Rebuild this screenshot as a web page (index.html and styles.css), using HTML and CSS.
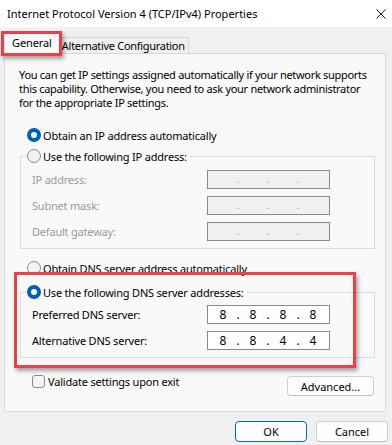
FILE: index.html
```html
<!DOCTYPE html>
<html lang="en">
<head>
    <meta charset="UTF-8">
    <meta name="viewport" content="width=device-width, initial-scale=1.0">
    <title>Internet Protocol Version 4 (TCP/IPv4) Properties</title>
    <link rel="stylesheet" href="styles.css">
</head>
<body>

    <div class="titlebar">
        <span class="title">Internet Protocol Version 4 (TCP/IPv4) Properties</span>
        <svg class="close" width="10" height="10" viewBox="0 0 10 10">
            <path d="M0.5 0.5 L9.5 9.5 M9.5 0.5 L0.5 9.5" stroke="#1a1a1a" stroke-width="1" fill="none"/>
        </svg>
    </div>

    <div class="tabs">
        <div class="tab active">General<span class="highlight"></span></div>
        <div class="tab">Alternative Configuration</div>
    </div>

    <div class="panel">
        <p class="intro">You can get IP settings assigned automatically if your network supports<br>this capability. Otherwise, you need to ask your network administrator<br>for the appropriate IP settings.</p>

        <div class="option first"><span class="radio checked"></span>Obtain an IP address automatically</div>

        <fieldset class="group ip-group disabled">
            <legend><span class="radio"></span>Use the following IP address:</legend>
            <div class="rows">
                <label>IP address:</label>
                <div class="ip"><span></span><i>.</i><span></span><i>.</i><span></span><i>.</i><span></span></div>
                <label>Subnet mask:</label>
                <div class="ip"><span></span><i>.</i><span></span><i>.</i><span></span><i>.</i><span></span></div>
                <label>Default gateway:</label>
                <div class="ip"><span></span><i>.</i><span></span><i>.</i><span></span><i>.</i><span></span></div>
            </div>
        </fieldset>

        <div class="option dns-auto"><span class="radio"></span>Obtain DNS server address automatically</div>

        <div class="dns-wrap">
            <span class="highlight"></span>
            <fieldset class="group dns-group">
                <legend><span class="radio checked"></span>Use the following DNS server addresses:</legend>
                <div class="rows">
                    <label>Preferred DNS server:</label>
                    <div class="ip"><span>8</span><i>.</i><span>8</span><i>.</i><span>8</span><i>.</i><span>8</span></div>
                    <label>Alternative DNS server:</label>
                    <div class="ip"><span>8</span><i>.</i><span>8</span><i>.</i><span>4</span><i>.</i><span>4</span></div>
                </div>
            </fieldset>
        </div>

        <div class="footer-row">
            <div class="check"><span class="box"></span>Validate settings upon exit</div>
            <button class="btn advanced">Advanced...</button>
        </div>
    </div>

    <div class="buttons">
        <button class="btn primary">OK</button>
        <button class="btn">Cancel</button>
    </div>

</body>
</html>
```

FILE: styles.css
```css
* {
    margin: 0;
    padding: 0;
    box-sizing: border-box;
}

body {
    width: 392px;
    height: 445px;
    overflow: hidden;
    background: #f0f0f0;
    font-family: 'Noto Sans', sans-serif;
    font-size: 11px;
    color: #000;
}

/* title bar */
.titlebar {
    height: 27px;
    background: #fff;
    display: flex;
    align-items: center;
    justify-content: space-between;
    padding: 0 6px 0 7px;
}

.title {
    font-size: 11px;
    color: #000;
}

/* tabs */
.tabs {
    height: 26px;
    display: flex;
    align-items: flex-end;
    padding-left: 4px;
    position: relative;
    z-index: 1;
}

.tab {
    height: 16px;
    padding: 0 3px 0 2px;
    display: flex;
    align-items: center;
    background: #f0f0f0;
    border: 1px solid #d9d9d9;
    border-bottom: none;
    border-left: none;
    line-height: 14px;
    letter-spacing: -0.3px;
}

.tab.active {
    position: relative;
    height: 21px;
    margin-bottom: -1px;
    padding: 0 7px 2px 7px;
    background: #f9f9f9;
    border-left: 1px solid #d9d9d9;
    letter-spacing: -0.1px;
}

.highlight {
    position: absolute;
    border: 3px solid #ea4149;
    box-shadow: 2px 3px 4px rgba(0, 0, 0, 0.35);
    pointer-events: none;
}

.tab .highlight {
    left: -4px;
    top: -3px;
    right: -3px;
    bottom: -2px;
}

/* panel */
.panel {
    margin-left: 4px;
    width: 382px;
    height: 359px;
    background: #f9f9f9;
    border: 1px solid #d9d9d9;
    padding-top: 14px;
    letter-spacing: -0.2px;
}

.intro {
    line-height: 14px;
    padding-left: 14px;
    white-space: nowrap;
    letter-spacing: -0.3px;
}

.option {
    display: flex;
    align-items: center;
    height: 16px;
    padding-left: 22px;
}

.option.first {
    margin-top: 17px;
}

.option.dns-auto {
    margin-top: 11px;
}

.radio {
    width: 14px;
    height: 14px;
    border-radius: 50%;
    border: 1px solid #8a8a8a;
    background: #f3f3f3;
    margin-right: 2px;
    flex: none;
}

.radio.checked {
    border: 4px solid #005fb8;
    background: #fff;
}

/* group boxes */
.group {
    margin: 5px 10px 0 15px;
    border: 1px solid #dcdcdc;
    padding: 0;
}

.group legend {
    display: flex;
    align-items: center;
    height: 16px;
    margin-left: 6px;
    padding-right: 3px;
}

.rows {
    display: grid;
    grid-template-columns: 175px 123px;
    row-gap: 7px;
    align-items: center;
    padding: 6px 0 7px 11px;
}

.ip {
    height: 19px;
    border: 1px solid #8a8a8a;
    background: #fff;
    display: flex;
    align-items: center;
    padding-left: 3px;
    font-size: 12px;
    letter-spacing: 0;
}

.ip span {
    width: 24px;
    text-align: center;
}

.ip i {
    font-style: normal;
    width: 6px;
    text-align: center;
}

.disabled .rows label {
    color: #9a9a9a;
}

.disabled .ip {
    background: #f0f0f0;
}

.disabled .ip i {
    color: #6f8fa8;
    font-size: 9px;
}

.dns-wrap {
    position: relative;
    margin-top: 8px;
}

.dns-wrap .highlight {
    left: 9px;
    top: -12px;
    width: 342px;
    bottom: -10px;
    z-index: 2;
}

.dns-group .rows {
    padding-top: 5px;
}

/* footer row */
.footer-row {
    display: flex;
    justify-content: space-between;
    align-items: flex-start;
    margin-top: 16px;
    padding: 0 11px 0 27px;
}

.check {
    display: flex;
    align-items: center;
    height: 14px;
}

.check .box {
    width: 13px;
    height: 13px;
    border: 1px solid #8a8a8a;
    border-radius: 3px;
    background: #f5f5f5;
    margin-right: 3px;
}

.btn {
    font-family: inherit;
    font-size: 11px;
    color: #000;
    background: #fdfdfd;
    border: 1px solid #d0d0d0;
    border-bottom-color: #c0c0c0;
    border-radius: 4px;
    cursor: pointer;
}

.advanced {
    width: 87px;
    height: 20px;
    margin-top: 2px;
}

.buttons {
    display: flex;
    justify-content: flex-end;
    gap: 9px;
    padding: 9px 4px 0 0;
}

.buttons .btn {
    width: 72px;
    height: 21px;
}

.btn.primary {
    border-color: #0067c0;
}
```
